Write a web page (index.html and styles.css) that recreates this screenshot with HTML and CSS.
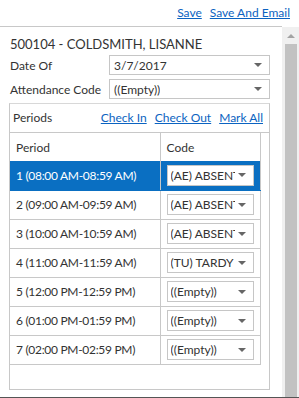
FILE: index.html
```html
<!DOCTYPE html>
<html lang="en">
<head>
    <meta charset="UTF-8">
    <title>Attendance</title>
    <link rel="stylesheet" href="styles.css">
</head>
<body>
    <div class="topbar">
        <a href="#">Save</a>
        <a href="#">Save And Email</a>
    </div>
    <div class="body">
        <div class="main">
            <div class="student">500104 - COLDSMITH, LISANNE</div>
            <div class="field">
                <label>Date Of</label>
                <div class="dropdown wide"><span>3/7/2017</span><i class="caret"></i></div>
            </div>
            <div class="field">
                <label>Attendance Code</label>
                <div class="dropdown wide"><span>((Empty))</span><i class="caret"></i></div>
            </div>
            <div class="panel">
                <div class="panel-head">
                    <span class="title">Periods</span>
                    <a href="#">Check In</a>
                    <a href="#">Check Out</a>
                    <a href="#">Mark All</a>
                </div>
                <table class="periods">
                    <tr class="head">
                        <td>Period</td>
                        <td>Code</td>
                    </tr>
                    <tr class="selected">
                        <td>1 (08:00 AM-08:59 AM)</td>
                        <td><div class="dropdown"><span>(AE) ABSENT</span><i class="caret"></i></div></td>
                    </tr>
                    <tr>
                        <td>2 (09:00 AM-09:59 AM)</td>
                        <td><div class="dropdown"><span>(AE) ABSENT</span><i class="caret"></i></div></td>
                    </tr>
                    <tr>
                        <td>3 (10:00 AM-10:59 AM)</td>
                        <td><div class="dropdown"><span>(AE) ABSENT</span><i class="caret"></i></div></td>
                    </tr>
                    <tr>
                        <td>4 (11:00 AM-11:59 AM)</td>
                        <td><div class="dropdown"><span>(TU) TARDY</span><i class="caret"></i></div></td>
                    </tr>
                    <tr>
                        <td>5 (12:00 PM-12:59 PM)</td>
                        <td><div class="dropdown"><span>((Empty))</span><i class="caret"></i></div></td>
                    </tr>
                    <tr>
                        <td>6 (01:00 PM-01:59 PM)</td>
                        <td><div class="dropdown"><span>((Empty))</span><i class="caret"></i></div></td>
                    </tr>
                    <tr>
                        <td>7 (02:00 PM-02:59 PM)</td>
                        <td><div class="dropdown"><span>((Empty))</span><i class="caret"></i></div></td>
                    </tr>
                </table>
            </div>
        </div>
        <div class="scrollbar">
            <div class="arrow-up"></div>
            <div class="thumb"></div>
        </div>
    </div>
</body>
</html>
```

FILE: styles.css
```css
* {
    box-sizing: border-box;
}
html, body {
    height: 100%;
}
body {
    margin: 0;
    font-family: 'Lato', 'Open Sans', sans-serif;
    font-size: 12px;
    color: #333;
    background: #fff;
    display: flex;
    flex-direction: column;
    border-bottom: 1px solid #555;
    overflow: hidden;
}
a {
    color: #0b63c1;
    text-decoration: underline;
}
.topbar {
    height: 27px;
    display: flex;
    justify-content: flex-end;
    align-items: center;
    gap: 8px;
    padding: 0 9px 2px 0;
    border-bottom: 1px solid #c8c8c8;
    margin-right: 17px;
}
.topbar a:last-child {
    margin-right: -17px;
}
.body {
    flex: 1;
    display: flex;
    min-height: 0;
}
.main {
    flex: 1;
    padding: 8px 12px 0 9px;
}
.student {
    height: 18px;
    line-height: 18px;
    font-size: 13px;
    padding-left: 1px;
    margin-bottom: 2px;
}
.field {
    display: flex;
    align-items: center;
    height: 20px;
    margin-bottom: 4px;
}
.field label {
    width: 100px;
    padding-left: 1px;
}
.dropdown {
    position: relative;
    height: 21px;
    border: 1px solid #c6c6c6;
    background: #fff;
    display: flex;
    align-items: center;
    padding: 0 18px 0 3px;
    overflow: hidden;
    white-space: nowrap;
    color: #333;
}
.dropdown.wide {
    flex: 1;
    height: 20px;
    padding-left: 4px;
}
.dropdown span {
    overflow: hidden;
}
.caret {
    position: absolute;
    right: 7px;
    top: 50%;
    margin-top: -2px;
    border-left: 4px solid transparent;
    border-right: 4px solid transparent;
    border-top: 4px solid #666;
}
.panel {
    height: 287px;
    border: 1px solid #c8c8c8;
    border-top-color: #d8d8d8;
}
.panel-head {
    display: flex;
    align-items: center;
    gap: 8px;
    height: 29px;
    padding: 0 6px 1px 3px;
    border-bottom: 1px solid #c8c8c8;
}
.panel-head .title {
    flex: 1;
}
.periods {
    border-collapse: collapse;
    width: 251px;
}
.periods td {
    height: 29px;
    padding: 0 0 0 6px;
    border-bottom: 1px solid #c8c8c8;
    border-right: 1px solid #c8c8c8;
}
.periods td:first-child {
    width: 150px;
    letter-spacing: -0.3px;
}
.periods tr.head td {
    height: 28px;
    border-bottom: none;
    letter-spacing: 0;
}
.periods tr.selected td {
    background: #0a6fc2;
    color: #fff;
    border-bottom-color: #0a6fc2;
}
.periods .dropdown {
    width: 87px;
}
.scrollbar {
    width: 17px;
    background: #f0f0f0;
    display: flex;
    flex-direction: column;
    align-items: center;
}
.arrow-up {
    margin: 7px 0 6px;
    border-left: 4px solid transparent;
    border-right: 4px solid transparent;
    border-bottom: 4px solid #a3a3a3;
}
.thumb {
    flex: 1;
    width: 12px;
    margin-left: 1px;
    background: #c2c2c2;
}
```
